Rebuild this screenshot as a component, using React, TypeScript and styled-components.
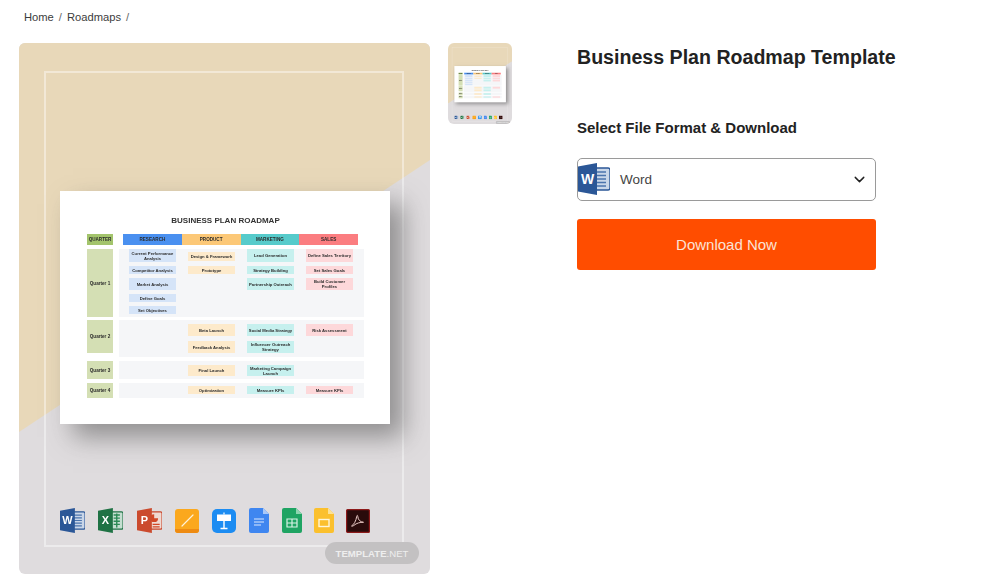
import React from "react";
import styled, { createGlobalStyle } from "styled-components";
import { ChevronDown } from "lucide-react";

const GlobalStyle = createGlobalStyle`
  html, body {
    margin: 0;
    padding: 0;
    background: #fff;
    font-family: "Liberation Sans", Arial, sans-serif;
  }
`;

type CellData = { text: string; h: number; top?: number };
type RowData = {
  name: string;
  height: number;
  gap: number;
  qtrHeight: number;
  cols: CellData[][];
};

const heads = [
  { text: "RESEARCH", color: "#4a90f0" },
  { text: "PRODUCT", color: "#fcc877" },
  { text: "MARKETING", color: "#56cbcb" },
  { text: "SALES", color: "#fb7d80" },
];

const tints = ["#d5e4f8", "#fdeacb", "#c6f0ee", "#fdd8da"];

const rows: RowData[] = [
  {
    name: "Quarter 1",
    height: 68,
    gap: 3,
    qtrHeight: 68,
    cols: [
      [
        { text: "Current Performance Analysis", h: 13 },
        { text: "Competitor Analysis", h: 8, top: 4 },
        { text: "Market Analysis", h: 12, top: 4 },
        { text: "Define Goals", h: 8, top: 4 },
        { text: "Set Objectives", h: 8, top: 4 },
      ],
      [
        { text: "Design & Framework", h: 9, top: 3 },
        { text: "Prototype", h: 8, top: 5 },
      ],
      [
        { text: "Lead Generation", h: 13 },
        { text: "Strategy Building", h: 8, top: 4 },
        { text: "Partnership Outreach", h: 12, top: 4 },
      ],
      [
        { text: "Define Sales Territory", h: 13 },
        { text: "Set Sales Goals", h: 8, top: 4 },
        { text: "Build Customer Profiles", h: 12, top: 4 },
      ],
    ],
  },
  {
    name: "Quarter 2",
    height: 37,
    gap: 4,
    qtrHeight: 33,
    cols: [
      [],
      [
        { text: "Beta Launch", h: 12, top: 4 },
        { text: "Feedback Analysis", h: 12, top: 5 },
      ],
      [
        { text: "Social Media Strategy", h: 12, top: 4 },
        { text: "Influencer Outreach Strategy", h: 12, top: 5 },
      ],
      [{ text: "Risk Assessment", h: 12, top: 4 }],
    ],
  },
  {
    name: "Quarter 3",
    height: 18,
    gap: 4,
    qtrHeight: 18,
    cols: [
      [],
      [{ text: "Final Launch", h: 11, top: 4 }],
      [{ text: "Marketing Campaign Launch", h: 11, top: 4 }],
      [],
    ],
  },
  {
    name: "Quarter 4",
    height: 15,
    gap: 0,
    qtrHeight: 15,
    cols: [
      [],
      [{ text: "Optimization", h: 8, top: 3 }],
      [{ text: "Measure KPIs", h: 8, top: 3 }],
      [{ text: "Measure KPIs", h: 8, top: 3 }],
    ],
  },
];

const WordIcon = ({ size = 25 }: { size?: number }) => (
  <svg width={size} height={size} viewBox="0 0 32 32">
    <path d="M13 5h17a2 2 0 0 1 2 2v18a2 2 0 0 1-2 2H13z" fill="#c9d6e8" stroke="#2b5797" strokeWidth="1.4" />
    <path d="M17 9h11M17 12.5h11M17 16h11M17 19.5h11M17 23h11" stroke="#4b74ad" strokeWidth="1.6" />
    <path d="M0 3.6 19 0v32L0 28.4z" fill="#2b5797" />
    <text x="9.5" y="21" fontFamily="Liberation Sans" fontWeight="700" fontSize="14" fill="#fff" textAnchor="middle">W</text>
  </svg>
);

const ExcelIcon = () => (
  <svg width={25} height={25} viewBox="0 0 32 32">
    <path d="M13 5h17a2 2 0 0 1 2 2v18a2 2 0 0 1-2 2H13z" fill="#c5ded0" stroke="#1f7244" strokeWidth="1.4" />
    <path d="M20 9h8M20 13h8M20 17h8M20 21h8M24 7v18" stroke="#2c8a55" strokeWidth="1.8" />
    <path d="M0 3.6 19 0v32L0 28.4z" fill="#1f7244" />
    <text x="9.5" y="21" fontFamily="Liberation Sans" fontWeight="700" fontSize="14" fill="#fff" textAnchor="middle">X</text>
  </svg>
);

const PowerPointIcon = () => (
  <svg width={25} height={25} viewBox="0 0 32 32">
    <path d="M13 5h17a2 2 0 0 1 2 2v18a2 2 0 0 1-2 2H13z" fill="#efd9d2" stroke="#c9462b" strokeWidth="1.4" />
    <path d="M22 8a5 5 0 1 0 5 5h-5z" fill="#d24726" />
    <path d="M20 21h9M20 24h9" stroke="#d24726" strokeWidth="1.6" />
    <path d="M0 3.6 19 0v32L0 28.4z" fill="#cb4a2d" />
    <text x="9.5" y="21" fontFamily="Liberation Sans" fontWeight="700" fontSize="14" fill="#fff" textAnchor="middle">P</text>
  </svg>
);

const PagesIcon = () => (
  <svg width={24} height={24} viewBox="0 0 24 24">
    <rect width="24" height="24" rx="3" fill="#fba81d" />
    <path d="M0 20h24v1a3 3 0 0 1-3 3H3a3 3 0 0 1-3-3z" fill="#ee8b12" />
    <path d="M7 17 18 6" stroke="#fff2d8" strokeWidth="1.2" strokeLinecap="round" />
  </svg>
);

const KeynoteIcon = () => (
  <svg width={24} height={24} viewBox="0 0 24 24">
    <rect width="24" height="24" rx="5" fill="#1c8cf2" />
    <rect x="5" y="5.5" width="14" height="6.5" fill="#fff" />
    <path d="M12 12v7M8.500 19.500h7" stroke="#fff" strokeWidth="1.4" />
    <path d="M12 3.600v2" stroke="#fff" strokeWidth="1.2" />
  </svg>
);

const PageShape = ({ color, fold, children }: { color: string; fold: string; children: React.ReactNode }) => (
  <svg width={20} height={25} viewBox="0 0 20 25">
    <path d="M2 0h12l6 6v17a2 2 0 0 1-2 2H2a2 2 0 0 1-2-2V2a2 2 0 0 1 2-2z" fill={color} />
    <path d="M14 0l6 6h-6z" fill={fold} />
    {children}
  </svg>
);

const PdfIcon = () => (
  <svg width={24} height={24} viewBox="0 0 24 24">
    <rect x="0.6" y="0.6" width="22.8" height="22.8" rx="1" fill="#2a0b0b" stroke="#8d1a1a" strokeWidth="1.2" />
    <path d="M5.500 17c2.500-1.500 4.500-5 5.200-9.500.2-1.500 1-1.500 1.100 0 .3 3.500 2.500 5.500 5.700 5.800-3.500-.2-7 .9-9.500 3-1 .8-2 1.200-2.500.7z" fill="none" stroke="#e8c8c4" strokeWidth="1" />
  </svg>
);

const fileIcons = [
  <WordIcon key="word" />,
  <ExcelIcon key="excel" />,
  <PowerPointIcon key="ppt" />,
  <PagesIcon key="pages" />,
  <KeynoteIcon key="keynote" />,
  <PageShape key="docs" color="#3f86f0" fold="#a9c8f8">
    <path d="M5 11h10M5 14h10M5 17h7" stroke="#dbe8fd" strokeWidth="1.2" />
  </PageShape>,
  <PageShape key="sheets" color="#1fa463" fold="#8ed4b0">
    <path d="M5 11h10v8H5zM5 15h10M10 11v8" fill="none" stroke="#d8f2e5" strokeWidth="1.2" />
  </PageShape>,
  <PageShape key="slides" color="#fbc02d" fold="#fde293">
    <rect x="5" y="11.500" width="10" height="7" fill="none" stroke="#fff6d8" strokeWidth="1.4" />
  </PageShape>,
  <PdfIcon key="pdf" />,
];

const Preview = () => (
  <Art>
    <Frame />
    <Sheet>
      <SheetTitle>BUSINESS PLAN ROADMAP</SheetTitle>
      <HeadRow>
        <QuarterHead>QUARTER</QuarterHead>
        <HeadGroup>
          {heads.map((h) => (
            <HeadCell key={h.text} $color={h.color}>{h.text}</HeadCell>
          ))}
        </HeadGroup>
      </HeadRow>
      {rows.map((row) => (
        <QuarterRow key={row.name} $height={row.height} $gap={row.gap}>
          <QuarterCell $height={row.qtrHeight}>{row.name}</QuarterCell>
          <RowPanel>
            {row.cols.map((col, i) => (
              <CellStack key={i}>
                {col.map((cell) => (
                  <TaskCell key={cell.text} $h={cell.h} $top={cell.top ?? 0} $color={tints[i]}>
                    {cell.text}
                  </TaskCell>
                ))}
              </CellStack>
            ))}
          </RowPanel>
        </QuarterRow>
      ))}
    </Sheet>
    <IconRow>
      {fileIcons.map((icon, i) => (
        <IconSlot key={i}>{icon}</IconSlot>
      ))}
    </IconRow>
    <Watermark>
      TEMPLATE<WatermarkThin>.NET</WatermarkThin>
    </Watermark>
  </Art>
);

export default function App() {
  return (
    <>
      <GlobalStyle />
      <Page>
        <Breadcrumb>
          <Crumb>Home</Crumb>
          <Sep>/</Sep>
          <Crumb>Roadmaps</Crumb>
          <Sep>/</Sep>
        </Breadcrumb>
        <Main>
          <Gallery>
            <Preview />
          </Gallery>
          <Thumb>
            <ThumbInner>
              <Preview />
            </ThumbInner>
          </Thumb>
          <Details>
            <Title>Business Plan Roadmap Template</Title>
            <FormatLabel>Select File Format &amp; Download</FormatLabel>
            <FormatSelect>
              <SelectIcon>
                <WordIcon size={32} />
              </SelectIcon>
              <SelectText>Word</SelectText>
              <ChevronDown size={17} strokeWidth={2} color="#222" />
            </FormatSelect>
            <DownloadButton>Download Now</DownloadButton>
          </Details>
        </Main>
      </Page>
    </>
  );
}

const Page = styled.div`
  width: 985px;
  height: 581px;
  overflow: hidden;
  padding: 10px 0 0 19px;
  box-sizing: border-box;
  color: #333;
`;

const Breadcrumb = styled.div`
  display: flex;
  align-items: center;
  height: 14px;
  padding-left: 5px;
  gap: 5px;
  font-size: 11.2px;
`;

const Crumb = styled.span`
  color: #3c3c3c;
`;

const Sep = styled.span`
  color: #666;
`;

const Main = styled.div`
  display: flex;
  align-items: flex-start;
  margin-top: 19px;
`;

const Gallery = styled.div`
  width: 411px;
  height: 531px;
  border-radius: 6px;
  overflow: hidden;
  flex: none;
`;

const Thumb = styled.div`
  width: 64px;
  height: 81px;
  margin-left: 18px;
  border-radius: 6px;
  overflow: hidden;
  flex: none;
  filter: blur(0.5px);
`;

const ThumbInner = styled.div`
  width: 411px;
  height: 531px;
  transform: scale(0.1557);
  transform-origin: top left;
`;

const Art = styled.div`
  position: relative;
  width: 411px;
  height: 531px;
  padding-top: 148px;
  box-sizing: border-box;
  background: #dfdcde;

  &::before {
    content: "";
    position: absolute;
    inset: 0;
    background: #e8d8b9;
    clip-path: polygon(0 0, 100% 0, 100% 117px, 0 389px);
  }
`;

const Frame = styled.div`
  position: absolute;
  left: 25px;
  top: 28px;
  width: 360px;
  height: 476px;
  box-sizing: border-box;
  border: 2px solid rgba(255, 255, 255, 0.42);
`;

const Sheet = styled.div`
  position: relative;
  width: 330px;
  height: 233px;
  margin-left: 41px;
  padding: 24px 0 0 27px;
  box-sizing: border-box;
  background: #fff;
  box-shadow: 13px 13px 24px rgba(80, 80, 80, 0.55);
  filter: blur(0.45px);
  color: #2b2b2b;
`;

const SheetTitle = styled.div`
  width: 277px;
  text-align: center;
  font-size: 8px;
  line-height: 11px;
  font-weight: 700;
  color: #333;
`;

const HeadRow = styled.div`
  display: flex;
  margin-top: 8px;
  margin-bottom: 4px;
  gap: 10px;
`;

const QuarterHead = styled.div`
  width: 26px;
  height: 11px;
  display: flex;
  align-items: center;
  justify-content: center;
  background: #a3c46c;
  font-size: 4.6px;
  font-weight: 700;
`;

const HeadGroup = styled.div`
  display: grid;
  grid-template-columns: repeat(4, 58.75px);
`;

const HeadCell = styled.div<{ $color: string }>`
  height: 11px;
  display: flex;
  align-items: center;
  justify-content: center;
  background: ${({ $color }) => $color};
  font-size: 4.6px;
  font-weight: 700;
`;

const QuarterRow = styled.div<{ $height: number; $gap: number }>`
  display: flex;
  gap: 6px;
  height: ${({ $height }) => $height}px;
  margin-bottom: ${({ $gap }) => $gap}px;
`;

const QuarterCell = styled.div<{ $height: number }>`
  width: 26px;
  height: ${({ $height }) => $height}px;
  display: flex;
  align-items: center;
  justify-content: center;
  background: #d4dfb4;
  font-size: 4.6px;
  font-weight: 700;
  white-space: nowrap;
`;

const RowPanel = styled.div`
  width: 245px;
  padding: 0 11px 0 10px;
  box-sizing: border-box;
  display: grid;
  grid-template-columns: repeat(4, 47px);
  gap: 12px;
  background: #f5f6f8;
`;

const CellStack = styled.div`
  display: flex;
  flex-direction: column;
`;

const TaskCell = styled.div<{ $h: number; $top: number; $color: string }>`
  height: ${({ $h }) => $h}px;
  margin-top: ${({ $top }) => $top}px;
  display: flex;
  align-items: center;
  justify-content: center;
  padding: 0 1px;
  text-align: center;
  line-height: 5px;
  background: ${({ $color }) => $color};
  font-size: 4.2px;
  font-weight: 700;
`;

const IconRow = styled.div`
  position: relative;
  display: grid;
  grid-template-columns: 38px 39px 38px 37px 37px 33px 32px 32px 24px;
  margin: 84px 0 0 41px;
  filter: blur(0.45px);
`;

const IconSlot = styled.div`
  display: flex;
  align-items: center;
  height: 25px;
`;

const Watermark = styled.div`
  position: absolute;
  left: 306px;
  top: 499px;
  width: 94px;
  height: 22px;
  border-radius: 11px;
  background: #c3c1c2;
  display: flex;
  align-items: center;
  justify-content: center;
  color: #eeeeee;
  font-size: 9.6px;
  font-weight: 700;
`;

const WatermarkThin = styled.span`
  font-weight: 400;
`;

const Details = styled.div`
  width: 320px;
  margin-left: 65px;
  display: flex;
  flex-direction: column;
`;

const Title = styled.h1`
  margin: 2px 0 0;
  font-size: 19.6px;
  line-height: 24px;
  font-weight: 700;
  color: #222;
  white-space: nowrap;
`;

const FormatLabel = styled.div`
  margin-top: 49px;
  font-size: 15px;
  line-height: 20px;
  font-weight: 700;
  color: #222;
  white-space: nowrap;
`;

const FormatSelect = styled.div`
  position: relative;
  width: 299px;
  height: 43px;
  margin-top: 20px;
  padding: 0 7px 0 42px;
  box-sizing: border-box;
  display: flex;
  align-items: center;
  justify-content: space-between;
  border: 1px solid #9a9a9a;
  border-radius: 5px;
  background: #fff;
`;

const SelectIcon = styled.div`
  position: absolute;
  left: 0;
  top: 4px;
  display: flex;
`;

const SelectText = styled.span`
  font-size: 13.5px;
  color: #444;
`;

const DownloadButton = styled.button`
  width: 299px;
  height: 51px;
  margin-top: 18px;
  border: 0;
  border-radius: 3px;
  background: #ff4d00;
  color: #fbe3d6;
  font-family: "Liberation Sans", Arial, sans-serif;
  font-size: 15px;
`;
